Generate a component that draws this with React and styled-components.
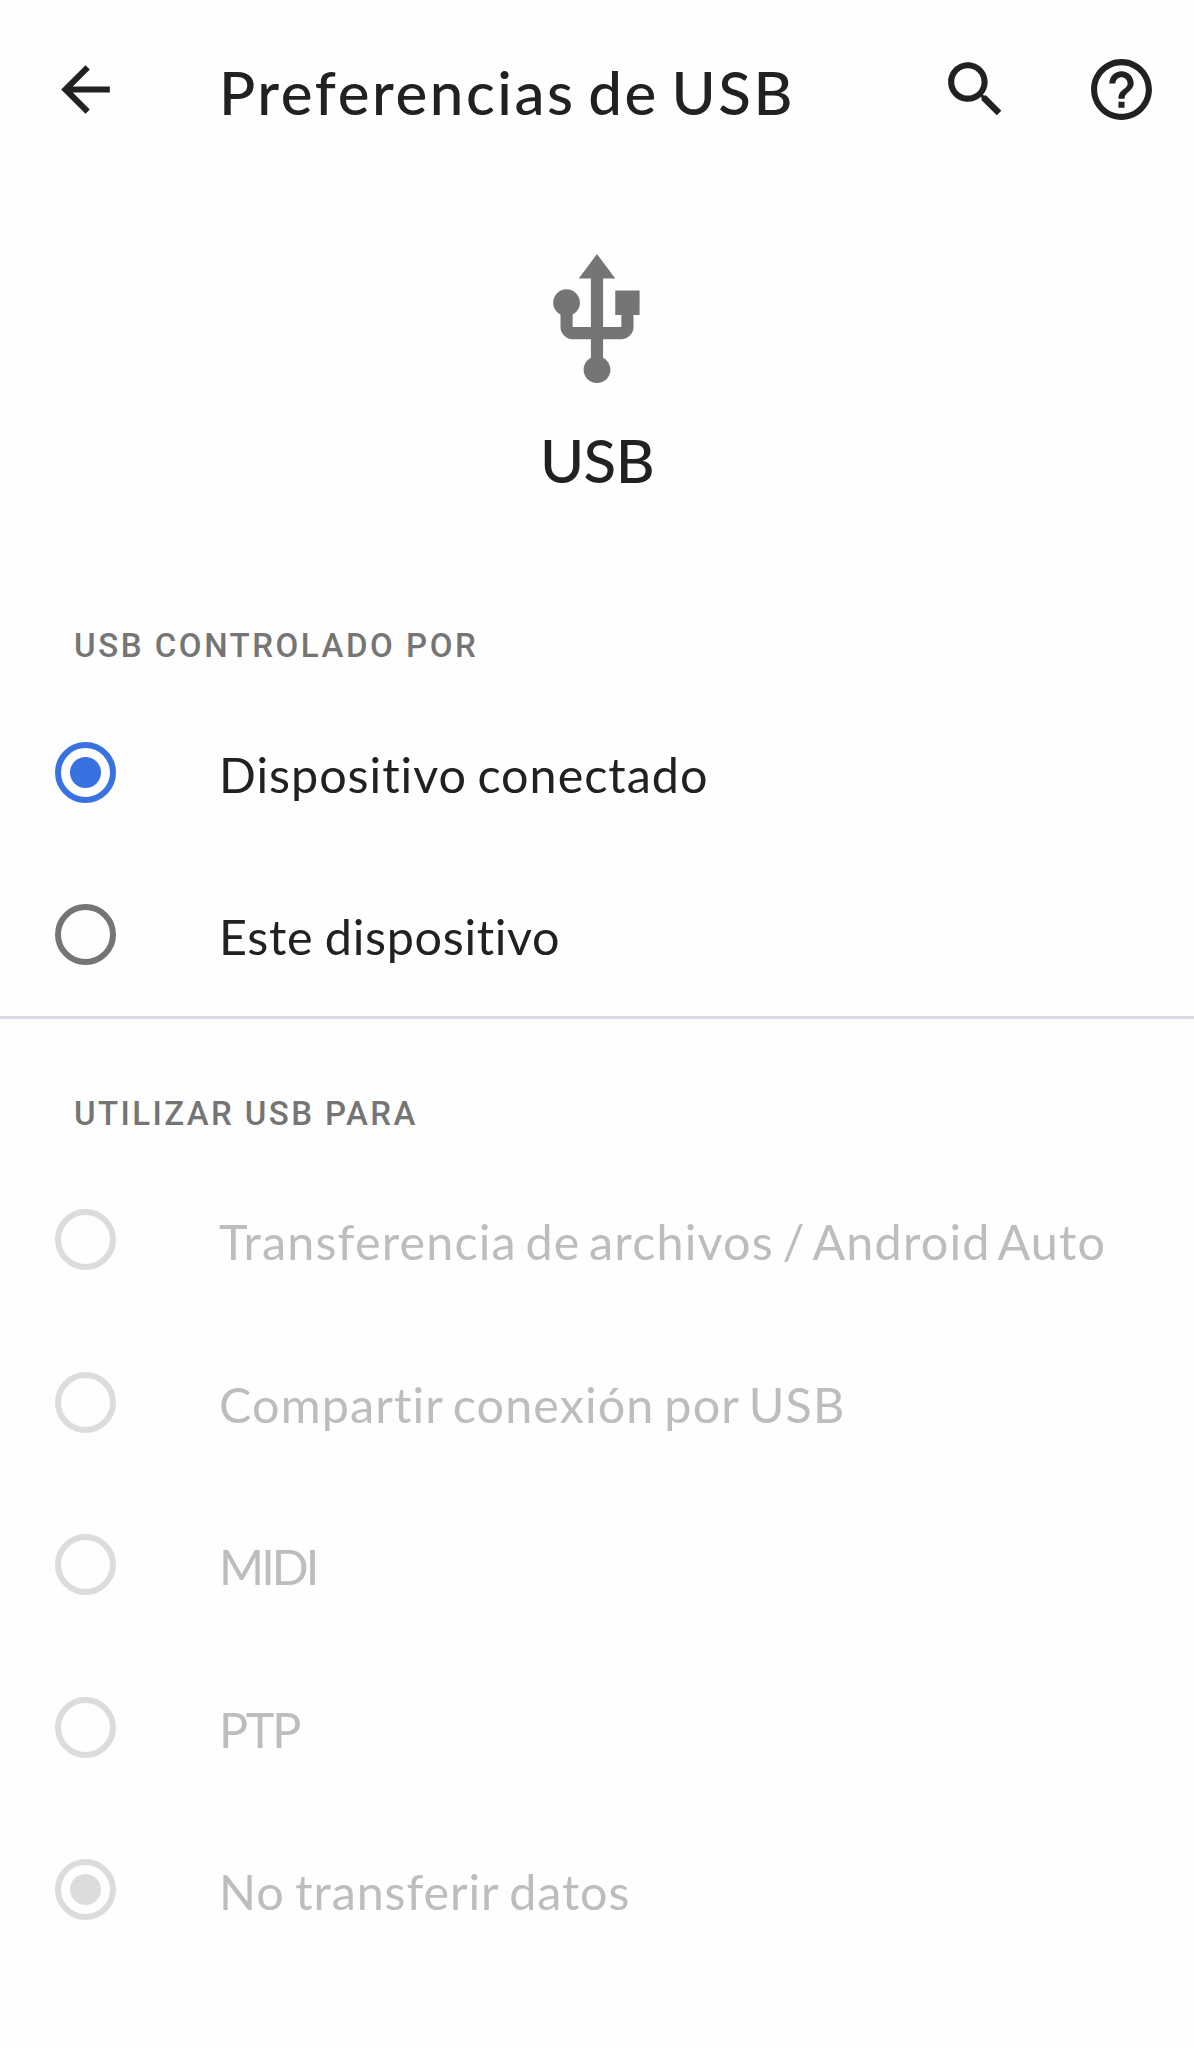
import React from 'react';
import styled, { createGlobalStyle } from 'styled-components';

const GlobalStyle = createGlobalStyle`
  *, *::before, *::after { box-sizing: border-box; }
  body { margin: 0; background: #fefefe; }
`;

const Screen = styled.main`
  width: 100%;
  min-height: 2048px;
  background: #fefefe;
  color: #212121;
  font-family: Lato, "Open Sans", sans-serif;
`;

const AppBar = styled.header`
  display: flex;
  align-items: center;
  height: 179px;
  padding: 0 36px 0 49px;
`;

const IconButton = styled.button`
  flex: none;
  width: 73px;
  height: 73px;
  margin: 0;
  padding: 0;
  border: 0;
  background: none;
  color: inherit;
  svg { display: block; width: 100%; height: 100%; }
`;

const Title = styled.h1`
  flex: 1;
  margin: 0;
  padding: 4px 0 0 97px;
  font-size: 60px;
  line-height: 72px;
  font-weight: 500;
  letter-spacing: 2.6px;
  word-spacing: -5.3px;
  white-space: nowrap;
`;

const Actions = styled.div`
  display: flex;
  gap: 73px;
`;

const Hero = styled.div`
  display: flex;
  flex-direction: column;
  align-items: center;
  gap: 30px;
  padding-top: 69px;
`;

const HeroIcon = styled.svg`
  display: block;
  width: 146px;
  height: 146px;
  color: #757575;
`;

const HeroTitle = styled.h2`
  margin: 0;
  font-size: 60px;
  line-height: 72px;
  font-weight: 500;
  letter-spacing: -0.6px;
`;

const Section = styled.section`
  padding-top: ${(p) => p.$top}px;
`;

const Divider = styled.hr`
  height: 3px;
  margin: 0;
  border: 0;
  background: #dadbe0;
`;

const SectionTitle = styled.h3`
  margin: 0 0 25px;
  padding-left: 74px;
  color: #757575;
  font-family: Roboto, sans-serif;
  font-size: 33px;
  line-height: 40px;
  font-weight: 500;
  letter-spacing: ${(p) => p.$tracking}px;
`;

const Option = styled.div`
  display: flex;
  align-items: center;
  gap: 103px;
  height: 162.5px;
  padding-left: 55px;
  color: ${(p) => (p.$disabled ? '#bdbdbd' : '#212121')};
`;

const radioColor = (p) => (p.$disabled ? '#dcdcdc' : p.$checked ? '#3871e0' : '#757575');

const Radio = styled.span`
  display: grid;
  place-items: center;
  flex: none;
  width: 61px;
  height: 61px;
  border: 6px solid ${radioColor};
  border-radius: 50%;
  &::after {
    content: '';
    display: ${(p) => (p.$checked ? 'block' : 'none')};
    width: 31px;
    height: 31px;
    border-radius: 50%;
    background: ${radioColor};
  }
`;

const Label = styled.span`
  padding-top: 3px;
  font-size: 48.5px;
  line-height: 60px;
  letter-spacing: ${(p) => p.$tracking}px;
  word-spacing: ${(p) => p.$wordGap}px;
  white-space: nowrap;
`;

const controllers = [
  { label: 'Dispositivo conectado', tracking: 0.98, wordGap: -3, checked: true },
  { label: 'Este dispositivo', tracking: 0.68, wordGap: -1.5 },
];

const uses = [
  { label: 'Transferencia de archivos / Android Auto', tracking: 1.16, wordGap: -5 },
  { label: 'Compartir conexión por USB', tracking: 1.11, wordGap: -3.7 },
  { label: 'MIDI', tracking: -2.9, wordGap: 0 },
  { label: 'PTP', tracking: -2.3, wordGap: 0 },
  { label: 'No transferir datos', tracking: 0.85, wordGap: -2.4, checked: true },
];

function Options({ items, disabled }) {
  return items.map((item) => (
    <Option key={item.label} role="radio" aria-checked={!!item.checked} $disabled={disabled}>
      <Radio $checked={item.checked} $disabled={disabled} />
      <Label $tracking={item.tracking} $wordGap={item.wordGap}>{item.label}</Label>
    </Option>
  ));
}

function Glyph({ d }) {
  return (
    <svg viewBox="0 0 24 24" fill="currentColor" aria-hidden="true">
      <path d={d} />
    </svg>
  );
}

export default function App() {
  return (
    <>
      <GlobalStyle />
      <Screen>
        <AppBar>
          <IconButton aria-label="Atrás">
            <Glyph d="M20 11H7.83l5.59-5.59L12 4l-8 8 8 8 1.41-1.41L7.83 13H20v-2z" />
          </IconButton>
          <Title>Preferencias de USB</Title>
          <Actions>
            <IconButton aria-label="Buscar">
              <Glyph d="M15.5 14h-.79l-.28-.27C15.41 12.59 16 11.11 16 9.5 16 5.91 13.09 3 9.5 3S3 5.91 3 9.5 5.91 16 9.5 16c1.61 0 3.09-.59 4.23-1.57l.27.28v.79l5 4.99L20.49 19l-4.99-5zm-6 0C7.01 14 5 11.99 5 9.5S7.01 5 9.5 5 14 7.01 14 9.5 11.99 14 9.5 14z" />
            </IconButton>
            <IconButton aria-label="Ayuda">
              <Glyph d="M11 18h2v-2h-2v2zm1-16C6.48 2 2 6.48 2 12s4.48 10 10 10 10-4.48 10-10S17.52 2 12 2zm0 18c-4.41 0-8-3.59-8-8s3.59-8 8-8 8 3.59 8 8-3.59 8-8 8zm0-14c-2.21 0-4 1.79-4 4h2c0-1.1.9-2 2-2s2 .9 2 2c0 2-3 1.75-3 5h2c0-2.25 3-2.5 3-5 0-2.21-1.79-4-4-4z" />
            </IconButton>
          </Actions>
        </AppBar>

        <Hero>
          <HeroIcon viewBox="0 0 24 24" fill="currentColor" aria-hidden="true">
            <path d="M15 7v4h1v2h-3V5h2l-3-4-3 4h2v8H8v-2.07c.7-.37 1.2-1.08 1.2-1.93 0-1.21-.99-2.2-2.2-2.2-1.21 0-2.2.99-2.2 2.2 0 .85.5 1.56 1.2 1.93V13c0 1.11.89 2 2 2h3v3.05c-.71.37-1.2 1.1-1.2 1.95 0 1.22.99 2.2 2.2 2.2 1.21 0 2.2-.98 2.2-2.2 0-.85-.49-1.58-1.2-1.95V15h3c1.11 0 2-.89 2-2v-2h1V7h-4z" />
          </HeroIcon>
          <HeroTitle>USB</HeroTitle>
        </Hero>

        <Section $top={130}>
          <SectionTitle $tracking={2.54}>USB CONTROLADO POR</SectionTitle>
          <Options items={controllers} />
        </Section>
        <Divider />
        <Section $top={74.7}>
          <SectionTitle $tracking={2.4}>UTILIZAR USB PARA</SectionTitle>
          <Options items={uses} disabled />
        </Section>
      </Screen>
    </>
  );
}
